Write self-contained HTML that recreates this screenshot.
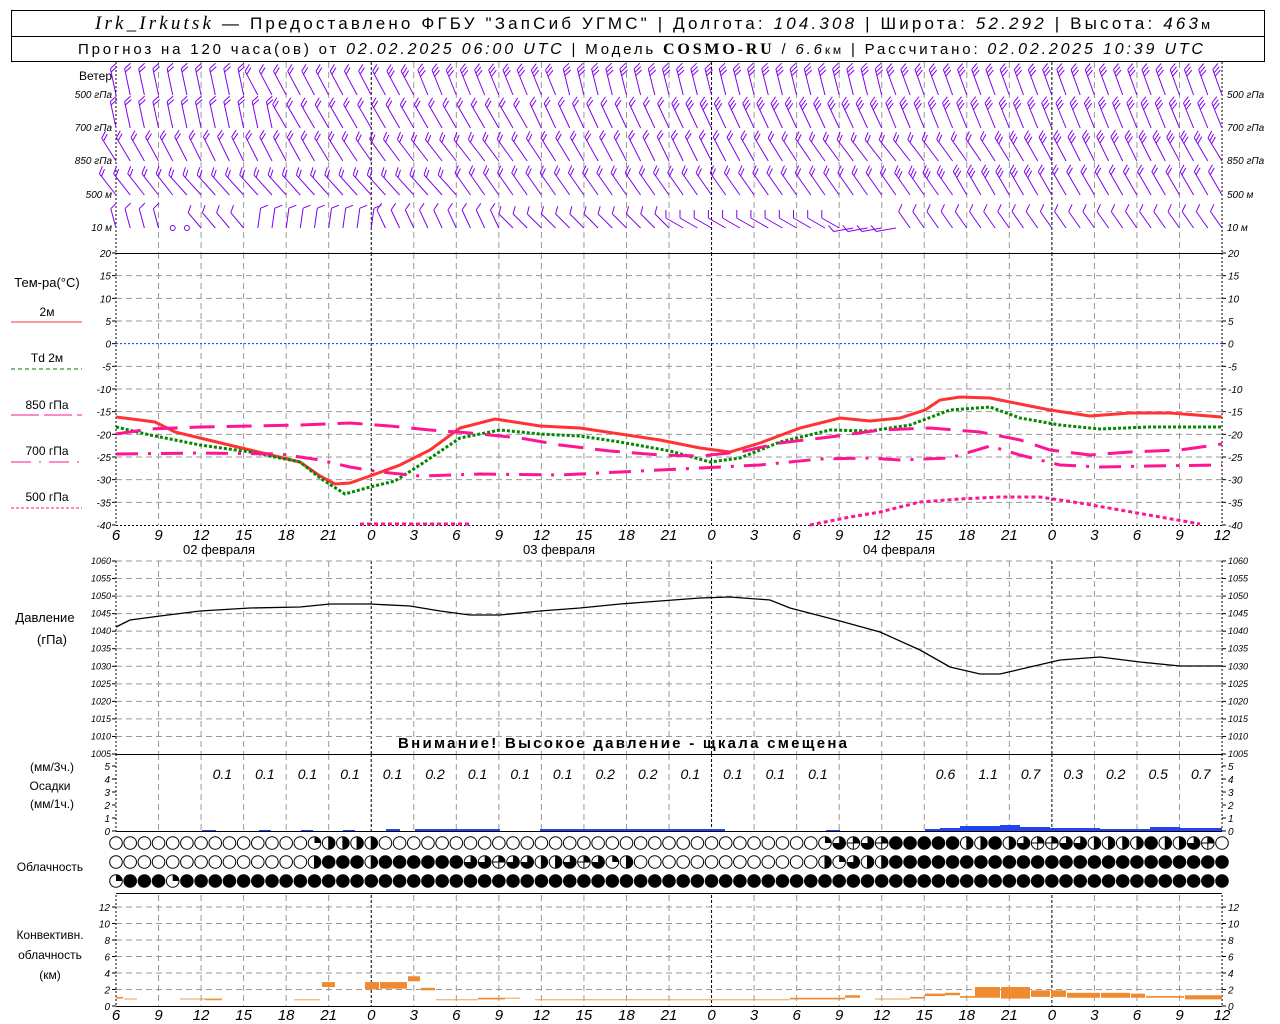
<!DOCTYPE html>
<html><head><meta charset="utf-8">
<style>
html,body{margin:0;padding:0;background:#fff;width:1280px;height:1024px;overflow:hidden}
svg{display:block}
text{font-family:"Liberation Sans",sans-serif}
.hd{font-size:17px}
.ax{font-size:10px;font-style:italic}
</style></head><body>
<svg id="s" width="1280" height="1024" xmlns="http://www.w3.org/2000/svg">
<rect x="11.5" y="10.5" width="1253" height="51" fill="none" stroke="#000"/>
<line x1="11" y1="36.5" x2="1265" y2="36.5" stroke="#000"/>
<text x="95" y="29" class="hd" textLength="1115" lengthAdjust="spacing"><tspan font-family="Liberation Serif" font-style="italic" font-size="19">Irk_Irkutsk</tspan> — Предоставлено ФГБУ "ЗапСиб УГМС" | Долгота: <tspan font-style="italic">104.308</tspan> | Широта: <tspan font-style="italic">52.292</tspan> | Высота: <tspan font-style="italic">463</tspan><tspan font-size="13">м</tspan></text>
<text x="78" y="54" font-size="15" textLength="1125" lengthAdjust="spacing">Прогноз на 120 часа(ов) от <tspan font-style="italic" font-size="16">02.02.2025 06:00 UTC</tspan>  | Модель <tspan font-family="Liberation Serif" font-weight="bold" font-size="16">COSMO-RU</tspan> / <tspan font-style="italic">6.6</tspan><tspan font-size="12">км</tspan> | Рассчитано: <tspan font-style="italic" font-size="16">02.02.2025 10:39 UTC</tspan></text>
<g id="g"></g>
</svg>
<script>
var NS="http://www.w3.org/2000/svg",G=document.getElementById("g");
function el(t,a,txt){var e=document.createElementNS(NS,t);for(var k in a)e.setAttribute(k,a[k]);if(txt!==undefined)e.textContent=txt;G.appendChild(e);return e;}
var X0=116,X1=1222,H=14.1795;
function hx(h){return X0+h*H;}
function line(x1,y1,x2,y2,st,w,da){var a={x1:x1,y1:y1,x2:x2,y2:y2,stroke:st,"stroke-width":w||1};if(da)a["stroke-dasharray"]=da;el("line",a);}
function pl(pts,st,w,da){var a={points:pts.map(p=>p.join(",")).join(" "),fill:"none",stroke:st,"stroke-width":w};if(da)a["stroke-dasharray"]=da;el("polyline",a);}
var panels=[[62,253],[253,525],[561,754],[754,831],[895,1006]];
panels.forEach(function(p){
 for(var k=0;k<=26;k++){var x=X0+k*42.54;var zero=((k*3+6)%24==0);
  if(k==0||k==26){line(x,p[0],x,p[1],"#000",1,"2,2");continue;}
  line(x,p[0],x,p[1],zero?"#000":"#999",1,zero?"3,2":"6,4");}
});
function ty(T){return 253+(20-T)*4.533;}
for(var T=20;T>=-40;T-=5){var y=ty(T);
 if(T!=20&&T!=-40&&T!=0)line(X0,y,X1,y,"#999",1,"6,4");
 line(X0-4,y,X0,y,"#000");line(X1,y,X1+4,y,"#000");
 el("text",{x:X0-5,y:y+4,"text-anchor":"end",class:"ax"},T);el("text",{x:X1+6,y:y+4,class:"ax"},T);}
line(X0,ty(0),X1,ty(0),"#0033ff",1,"2,2");
line(X0,253.5,X1,253.5,"#000");line(X0,525.5,X1,525.5,"#000",1,"2,2");
function py(P){return 561+(1060-P)*3.509;}
for(var P=1060;P>=1005;P-=5){var y=py(P);
 if(P!=1005)line(X0,y,X1,y,"#999",1,"6,4");
 line(X0-4,y,X0,y,"#000");line(X1,y,X1+4,y,"#000");
 el("text",{x:X0-5,y:y+3,"text-anchor":"end",style:"font-size:9px;font-style:italic"},P);
 el("text",{x:X1+6,y:y+3,style:"font-size:9px;font-style:italic"},P);}
line(X0,754.5,X1,754.5,"#000");
for(var i=0;i<=5;i++){var y=831-i*13;line(X0-4,y,X0,y,"#000");line(X1,y,X1+4,y,"#000");
 el("text",{x:X0-6,y:y+4,"text-anchor":"end",class:"ax"},i);el("text",{x:X1+6,y:y+4,class:"ax"},i);}
line(X0,831.5,X1,831.5,"#000");
function cy(k){return 1006-k*8.25;}
for(var k=0;k<=12;k+=2){var y=cy(k);if(k>0)line(X0,y,X1,y,"#999",1,"6,4");
 line(X0-4,y,X0,y,"#000");line(X1,y,X1+4,y,"#000");
 el("text",{x:X0-6,y:y+4,"text-anchor":"end",class:"ax"},k);el("text",{x:X1+6,y:y+4,class:"ax"},k);}
line(X0,893.5,X1,893.5,"#000");line(X0,1006.5,X1,1006.5,"#000");
var hrs=[6,9,12,15,18,21,0,3,6,9,12,15,18,21,0,3,6,9,12,15,18,21,0,3,6,9,12];
hrs.forEach(function(h,k){var x=X0+k*42.54;
 el("text",{x:x,y:540,"text-anchor":"middle",style:"font-size:15px;font-style:italic"},h);
 el("text",{x:x,y:1020,"text-anchor":"middle",style:"font-size:15px;font-style:italic"},h);});
el("text",{x:219,y:554,"text-anchor":"middle",style:"font-size:13px"},"02 февраля");
el("text",{x:559,y:554,"text-anchor":"middle",style:"font-size:13px"},"03 февраля");
el("text",{x:899,y:554,"text-anchor":"middle",style:"font-size:13px"},"04 февраля");
function lt(x,y,s,anc,st){el("text",{x:x,y:y,"text-anchor":anc||"middle",style:st||"font-size:12px"},s);}
lt(112,80,"Ветер","end");
[["500 гПа",98],["700 гПа",131],["850 гПа",164],["500 м",198],["10   м",231]].forEach(function(a){
 el("text",{x:112,y:a[1],"text-anchor":"end",style:"font-size:10px;font-style:italic"},a[0]);
 el("text",{x:1227,y:a[1],style:"font-size:10px;font-style:italic"},a[0]);});
lt(47,287,"Тем-ра(°C)","middle","font-size:13px");
lt(47,316,"2м");line(11,322,82,322,"#ff3333",1);
lt(47,362,"Td  2м");line(11,369,82,369,"#007700",1,"4,3");
lt(47,409,"850 гПа");line(11,415,82,415,"#ff1493",1,"28,5");
lt(47,455,"700 гПа");line(11,462,82,462,"#ff1493",1,"20,8,2,8");
lt(47,501,"500 гПа");line(11,508,82,508,"#ff1493",1,"3,2");
lt(45,622,"Давление","middle","font-size:13px");lt(52,644,"(гПа)","middle","font-size:13px");
lt(52,771,"(мм/3ч.)");lt(50,790,"Осадки");lt(52,808,"(мм/1ч.)");
lt(50,871,"Облачность");
lt(50,939,"Конвективн.");lt(50,959,"облачность");lt(50,979,"(км)");
el("text",{x:398,y:748,textLength:"449",lengthAdjust:"spacing",style:"font-size:15px;font-weight:bold"},"Внимание! Высокое давление - щкала смещена");
pl([[116,417],[155,422],[175,432],[200,438],[250,450],[300,462],[320,476],[335,484],[350,483],[370,476],[400,465],[430,450],[460,428],[495,419],[540,426],[580,428],[620,434],[660,440],[700,448],[730,452],[760,443],[800,428],[840,418],[870,421],[900,418],[925,410],[940,400],[960,397],[990,398],[1020,404],[1050,410],[1090,416],[1130,413],[1170,413],[1222,417]],"#ff3333",3);
pl([[116,427],[150,435],[175,440],[200,445],[250,452],[300,462],[320,478],[345,494],[370,487],[395,481],[420,465],[460,438],[500,430],[540,434],[580,436],[620,442],[670,451],[710,462],[740,458],[780,442],[830,430],[870,431],[910,425],[950,410],[990,407],[1020,418],[1060,425],[1100,429],[1150,427],[1222,427]],"#008800",3,"3,2");
pl([[116,434],[150,429],[200,427],[300,425],[350,423],[390,426],[430,430],[470,433],[520,438],[560,445],[610,451],[660,455],[700,456],[740,452],[780,443],[830,437],[880,430],[930,428],[980,432],[1020,440],[1050,450],[1090,455],[1130,452],[1180,450],[1222,444]],"#ff1493",3,"25,12");
pl([[116,454],[200,453],[280,454],[320,460],[350,467],[380,472],[420,476],[480,474],[560,475],[640,471],[700,468],[760,465],[820,459],[870,458],[900,460],[950,458],[990,446],[1020,455],[1060,465],[1100,467],[1150,466],[1222,465]],"#ff1493",3,"22,10,3,10");
pl([[360,524],[470,524]],"#ff1493",3,"4,3");
pl([[810,525],[850,517],[880,512],[920,502],[960,499],[1000,497],[1040,497],[1080,503],[1120,510],[1160,517],[1200,524]],"#ff1493",3,"4,3");
pl([[116,627],[130,620],[160,616],[200,611],[250,608],[300,607],[330,604],[370,604],[410,606],[440,611],[470,615],[500,615],[540,611],[580,608],[620,604],[660,601],[700,598],[730,597],[770,600],[790,608],[840,621],[880,632],[920,650],[950,667],[980,674],[1000,674],[1030,667],[1060,660],[1100,657],[1140,662],[1180,666],[1222,666]],"#000",1.3);
var pv={2:"0.1",3:"0.1",4:"0.1",5:"0.1",6:"0.1",7:"0.2",8:"0.1",9:"0.1",10:"0.1",11:"0.2",12:"0.2",13:"0.1",14:"0.1",15:"0.1",16:"0.1",19:"0.6",20:"1.1",21:"0.7",22:"0.3",23:"0.2",24:"0.5",25:"0.7"};
for(var k in pv)el("text",{x:X0+(+k+0.5)*42.54,y:779,"text-anchor":"middle",style:"font-size:14px;font-style:italic"},pv[k]);
[[202,216,1],[259,271,1],[301,313,1],[343,355,1],[386,400,2],[415,500,2],[540,725,2],[826,840,1],[925,940,2],[940,960,3],[960,1000,5],[1000,1020,6],[1020,1050,4],[1050,1100,3],[1100,1150,2],[1150,1180,4],[1180,1222,3]].forEach(function(b){
 el("rect",{x:b[0],y:831-b[2],width:b[1]-b[0],height:b[2],fill:"#2244ee"});});
var rows=[
"ooooooooooooooqhhhhoooooooooooooooooooooooooooooooqtxtxfffffhhfhtxxtthhhhfhhtxo",
"oooooooooooooohfffhffffffttxtthhtxtqhooooooooooooohqthhfffffffffffffffffffffffff",
"qfffqffffffffffffffffffffffffffffffffffffffffffffffffffffffffffffffffffffffffff"];
var ry=[843,862,881];
rows.forEach(function(r,ri){for(var i=0;i<79;i++){var c=r[i]||"f",x=hx(i),y=ry[ri],R=6.3;
 if(c=="f"){el("circle",{cx:x,cy:y,r:R+0.5,fill:"#000"});continue;}
 el("circle",{cx:x,cy:y,r:R,fill:"#fff",stroke:"#000","stroke-width":1});
 if(c=="h"){el("path",{d:"M"+x+","+(y-R)+" A"+R+","+R+" 0 0 1 "+x+","+(y+R)+"Z",fill:"#000"});line(x,y-R,x,y+R,"#000");}
 if(c=="q"){el("path",{d:"M"+x+","+y+" L"+x+","+(y-R)+" A"+R+","+R+" 0 0 1 "+(x+R)+","+y+"Z",fill:"#000"});}
 if(c=="t"){el("path",{d:"M"+x+","+y+" L"+x+","+(y-R)+" A"+R+","+R+" 0 1 1 "+(x-R)+","+y+"Z",fill:"#000"});}
 if(c=="x"){el("path",{d:"M"+x+","+y+" L"+x+","+(y-R)+" A"+R+","+R+" 0 0 1 "+(x+R)+","+y+"Z",fill:"#000"});line(x,y-R,x,y+R,"#000");line(x-R,y,x+R,y,"#000");}
}});
[[116,123,0.9,1.1],[124,137,0.8,0.9],[180,222,0.8,0.9],[205,222,0.7,0.8],[294,320,0.7,0.8],[322,335,2.3,2.9],[365,379,2.0,2.9],[380,407,2.1,2.9],[408,420,3.0,3.6],[421,435,1.9,2.2],[436,478,0.7,0.8],[478,505,0.8,1.0],[505,520,0.9,1.0],[535,712,0.7,0.8],[712,790,0.7,0.8],[790,845,0.8,1.0],[845,860,1.0,1.3],[875,910,0.8,0.9],[910,925,0.9,1.1],[925,945,1.2,1.5],[945,960,1.3,1.6],[960,975,1.0,1.2],[975,1000,1.0,2.3],[1001,1030,0.9,2.3],[1031,1050,1.1,1.9],[1051,1066,1.1,1.9],[1067,1100,1.0,1.6],[1101,1130,1.0,1.6],[1131,1145,1.0,1.5],[1146,1184,1.0,1.2],[1185,1222,0.8,1.3]].forEach(function(b){
 el("rect",{x:b[0],y:cy(b[3]),width:b[1]-b[0],height:(b[3]-b[2])*8.25,fill:"#f08a30"});});
var rowY=[95,128,161,195,228];
function barb(x,y,ang,n,len){var a=ang*Math.PI/180,dx=Math.sin(a),dy=-Math.cos(a);
 var tx=x+dx*len,ty2=y+dy*len;var d="M"+x.toFixed(1)+","+y+" L"+tx.toFixed(1)+","+ty2.toFixed(1);
 var t=60*Math.PI/180,fx=dx*Math.cos(t)-dy*Math.sin(t),fy=dx*Math.sin(t)+dy*Math.cos(t);
 for(var i=0;i<n;i++){var bx=tx-dx*i*3.5,by=ty2-dy*i*3.5;
  d+=" M"+bx.toFixed(1)+","+by.toFixed(1)+" l"+(fx*8).toFixed(1)+","+(fy*8).toFixed(1);}
 el("path",{d:d,fill:"none",stroke:"#8000ee","stroke-width":1});}
for(var r=0;r<5;r++){for(var i=0;i<79;i++){
 var x=hx(i),ang,n,len=27;
 if(r==0){ang=(i<10?-12:(i<22?-28:(i<32?-22:(i<55?-14:-20))));n=(i<20?2:3);}
 else if(r==1){ang=(i<12?-12:(i<30?-30:(i<55?-25:-22)));n=(i<40?2:3);}
 else if(r==2){ang=-32+6*Math.sin(i/5);n=(i>62?3:2);}
 else if(r==3){ang=(i<5?-38:(i<25?-42:(i<60?-35:-30)));n=(i>55&&i<66?3:2);}
 else{len=20;n=1;
  if(i==4||i==5){el("circle",{cx:x,cy:228,r:2.5,fill:"none",stroke:"#8000ee"});continue;}
  if(i<4)ang=-15;else if(i<10)ang=-40;else if(i<19)ang=8;else if(i<28)ang=-25;
  else if(i<40)ang=-45;else if(i<52)ang=-60;else if(i<56)ang=-100;else if(i<62)ang=-35;else ang=-35;}
 barb(x,rowY[r],ang,n,len);}}
</script>
</body></html>
